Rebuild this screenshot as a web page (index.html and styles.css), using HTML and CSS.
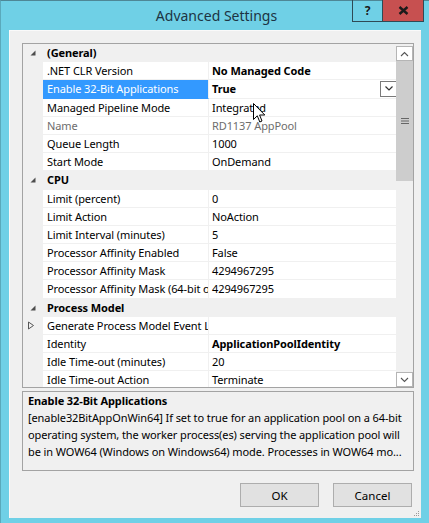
FILE: index.html
```html
<!DOCTYPE html>
<html>
<head>
<meta charset="utf-8">
<link rel="stylesheet" href="styles.css">
</head>
<body>
<div class="window">
  <div class="titlebar">
    <div></div>
    <div class="title">Advanced Settings</div>
    <div class="caption">
      <div class="cbtn help">?</div>
      <div class="cbtn close"><svg width="11" height="9" viewBox="0 0 11 9"><path d="M1.5 1 L9.5 8 M9.5 1 L1.5 8" stroke="#1a1a1a" stroke-width="2.4" stroke-linecap="butt"/></svg></div>
    </div>
  </div>
  <div class="client">
    <div class="grid">
      <div class="rows">
        <div class="row cat"><span class="gut"><svg width="6" height="6" viewBox="0 0 6 6"><polygon points="5.5,0.5 5.5,5.5 0.5,5.5" fill="#4d4d4d"/></svg></span><span class="catname">(General)</span></div>
        <div class="row"><span class="gut"></span><span class="name">.NET CLR Version</span><span class="val b">No Managed Code</span></div>
        <div class="row"><span class="gut"></span><span class="name sel">Enable 32-Bit Applications</span><span class="val b drop">True<span class="dd"><svg width="8" height="5" viewBox="0 0 8 5"><path d="M0.5 0.5 L4 4 L7.5 0.5" fill="none" stroke="#333" stroke-width="1.2"/></svg></span></span></div>
        <div class="row"><span class="gut"></span><span class="name">Managed Pipeline Mode</span><span class="val">Integrated</span></div>
        <div class="row dis"><span class="gut"></span><span class="name">Name</span><span class="val">RD1137 AppPool</span></div>
        <div class="row"><span class="gut"></span><span class="name">Queue Length</span><span class="val">1000</span></div>
        <div class="row"><span class="gut"></span><span class="name">Start Mode</span><span class="val">OnDemand</span></div>
        <div class="row cat"><span class="gut"><svg width="6" height="6" viewBox="0 0 6 6"><polygon points="5.5,0.5 5.5,5.5 0.5,5.5" fill="#4d4d4d"/></svg></span><span class="catname">CPU</span></div>
        <div class="row"><span class="gut"></span><span class="name">Limit (percent)</span><span class="val">0</span></div>
        <div class="row"><span class="gut"></span><span class="name">Limit Action</span><span class="val">NoAction</span></div>
        <div class="row"><span class="gut"></span><span class="name">Limit Interval (minutes)</span><span class="val">5</span></div>
        <div class="row"><span class="gut"></span><span class="name">Processor Affinity Enabled</span><span class="val">False</span></div>
        <div class="row"><span class="gut"></span><span class="name">Processor Affinity Mask</span><span class="val">4294967295</span></div>
        <div class="row"><span class="gut"></span><span class="name">Processor Affinity Mask (64-bit option)</span><span class="val">4294967295</span></div>
        <div class="row cat"><span class="gut"><svg width="6" height="6" viewBox="0 0 6 6"><polygon points="5.5,0.5 5.5,5.5 0.5,5.5" fill="#4d4d4d"/></svg></span><span class="catname">Process Model</span></div>
        <div class="row"><span class="gut exp"><svg width="6" height="9" viewBox="0 0 6 9"><polygon points="0.5,1 5.5,4.5 0.5,8" fill="none" stroke="#555" stroke-width="1"/></svg></span><span class="name">Generate Process Model Event Log Entry</span><span class="val"></span></div>
        <div class="row"><span class="gut"></span><span class="name">Identity</span><span class="val b">ApplicationPoolIdentity</span></div>
        <div class="row"><span class="gut"></span><span class="name">Idle Time-out (minutes)</span><span class="val">20</span></div>
        <div class="row"><span class="gut"></span><span class="name">Idle Time-out Action</span><span class="val">Terminate</span></div>
        <div class="row"><span class="gut"></span><span class="name">Load User Profile</span><span class="val">True</span></div>
      </div>
      <div class="scrollbar">
        <div class="arrow"><svg width="9" height="6" viewBox="0 0 9 6"><path d="M1 5 L4.5 1.5 L8 5" fill="none" stroke="#555" stroke-width="1.1"/></svg></div>
        <div class="thumb"><svg width="8" height="6" viewBox="0 0 8 6"><path d="M0 0.5 H8 M0 3 H8 M0 5.5 H8" stroke="#666" stroke-width="1"/></svg></div>
        <div class="track"></div>
        <div class="arrow"><svg width="9" height="6" viewBox="0 0 9 6"><path d="M1 1 L4.5 4.5 L8 1" fill="none" stroke="#555" stroke-width="1.1"/></svg></div>
      </div>
    </div>
    <div class="desc">
      <div class="desc-title">Enable 32-Bit Applications</div>
      <div class="desc-text">[enable32BitAppOnWin64] If set to true for an application pool on a 64-bit<br>operating system, the worker process(es) serving the application pool will<br>be in WOW64 (Windows on Windows64) mode. Processes in WOW64 mo...</div>
    </div>
    <div class="buttons">
      <button class="btn">OK</button>
      <button class="btn">Cancel</button>
    </div>
    <div class="gripbar"><svg width="6" height="6" viewBox="0 0 6 6"><g fill="#9a9a9a"><rect x="4" y="0" width="1" height="1"/><rect x="2" y="2" width="1" height="1"/><rect x="4" y="2" width="1" height="1"/><rect x="0" y="4" width="1" height="1"/><rect x="2" y="4" width="1" height="1"/><rect x="4" y="4" width="1" height="1"/></g></svg></div>
  </div>
  <svg class="cursor" width="13" height="21" viewBox="0 0 13 21"><path d="M0.5 0.5 L0.5 16.5 L4.3 12.8 L6.8 19 L9 18 L6.6 12 L11.8 12 Z" fill="#fff" stroke="#000" stroke-width="1"/></svg>
</div>
</body>
</html>
```
FILE: styles.css
```css
* { box-sizing: border-box; }
html, body { margin: 0; padding: 0; }
body {
  width: 429px;
  height: 523px;
  overflow: hidden;
  font-family: "Noto Sans", "Open Sans", sans-serif;
  font-size: 11px;
  letter-spacing: -0.1px;
  color: #000;
  background: #fff;
}
.window {
  position: relative;
  width: 429px;
  height: 523px;
  background: #6fd0e6;
  border-top: 1px solid #4e8796;
  border-left: 1px solid #5aa9bb;
  display: flex;
  flex-direction: column;
}
.titlebar {
  height: 29px;
  display: grid;
  grid-template-columns: 1fr auto 1fr;
  align-items: start;
}
.title {
  font-size: 14px;
  letter-spacing: 0;
  color: #1d3443;
  line-height: 29px;
  padding-left: 3px;
}
.caption {
  justify-self: end;
  display: flex;
  margin-right: 5px;
  margin-top: -1px;
}
.cbtn {
  height: 22px;
  display: flex;
  align-items: center;
  justify-content: center;
  border: 1px solid #2f4a55;
  border-top: none;
}
.help {
  width: 30px;
  font-weight: 700;
  font-size: 12px;
  color: #1a1a1a;
  border-right: none;
}
.close {
  width: 42px;
  background: #c75050;
}
.client {
  margin: 0 8px 5px 8px;
  flex: 1;
  background: #f0f0f0;
  border-top: 1px solid #fafafa;
  border-left: 1px solid #fafafa;
  padding: 12px 7px 0 12px;
  display: flex;
  flex-direction: column;
}
.grid {
  height: 345px;
  border: 1px solid #a3a3a3;
  background: #fff;
  display: flex;
  overflow: hidden;
}
.rows {
  flex: 1;
  overflow: hidden;
  display: flex;
  flex-direction: column;
}
.row {
  flex: 0 0 18.2px;
  height: 18.2px;
  display: grid;
  grid-template-columns: 20px 166px 1fr;
  align-items: stretch;
  line-height: 17px;
  white-space: nowrap;
}
.gut {
  background: #f0f0f0;
  display: flex;
  align-items: center;
  justify-content: flex-start;
  padding-left: 7px;
}
.gut.exp { padding-left: 5px; }
.name, .val {
  overflow: hidden;
  border-bottom: 1px solid #f0f0f0;
}
.name {
  padding-left: 4px;
  border-right: 1px solid #f0f0f0;
}
.val {
  padding-left: 3px;
}
.b { font-weight: 700; }
.sel {
  background: #3399ff;
  color: #fff;
  border-bottom-color: #3399ff;
}
.drop {
  display: flex;
  justify-content: space-between;
  align-items: center;
  overflow: visible;
}
.dd {
  width: 17px;
  height: 16px;
  border: 1px solid #7a7a7a;
  background: #fff;
  display: flex;
  align-items: center;
  justify-content: center;
  margin-right: -1px;
}
.dis { color: #6d6d6d; }
.cat {
  background: #f0f0f0;
}
.catname {
  grid-column: 2 / 4;
  font-weight: 700;
  padding-left: 4px;
}
.scrollbar {
  width: 17px;
  background: #f0f0f0;
  display: flex;
  flex-direction: column;
  padding-top: 2px;
}
.arrow {
  height: 15px;
  background: #fff;
  border: 1px solid #b5b5b5;
  display: flex;
  align-items: center;
  justify-content: center;
}
.thumb {
  height: 120px;
  background: #cdcdcd;
  display: flex;
  align-items: center;
  justify-content: center;
}
.track { flex: 1; }
.desc {
  margin-top: 3px;
  height: 80px;
  border: 1px solid #a3a3a3;
  background: #f0f0f0;
  padding: 1px 5px 0 5px;
  white-space: nowrap;
  overflow: hidden;
}
.desc-title {
  font-weight: 700;
  line-height: 16px;
}
.desc-text {
  line-height: 17px;
}
.buttons {
  display: flex;
  justify-content: flex-end;
  gap: 14px;
  margin-top: 12px;
  padding-right: 2px;
}
.btn {
  width: 79px;
  height: 24px;
  font-family: inherit;
  font-size: 11.5px;
  color: #000;
  background: #e1e1e1;
  border: 1px solid #adadad;
  padding: 0;
}
.gripbar {
  flex: 1;
  display: flex;
  justify-content: flex-end;
  align-items: flex-end;
  margin-right: -6px;
  padding-bottom: 1px;
}
.cursor {
  position: absolute;
  left: 252px;
  top: 102px;
}
```
